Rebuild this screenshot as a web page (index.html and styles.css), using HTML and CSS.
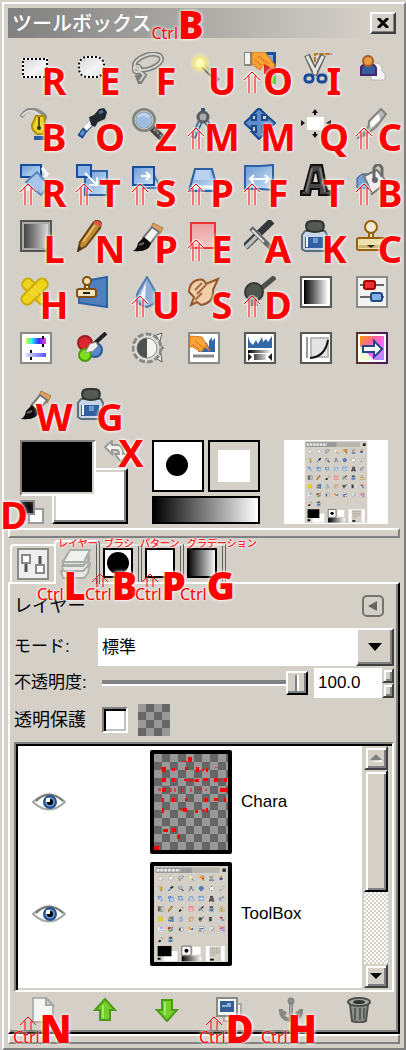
FILE: index.html
```html
<!DOCTYPE html>
<html lang="ja">
<head>
<meta charset="utf-8">
<meta name="viewport" content="width=device-width">
<title>ツールボックス</title>
<link rel="stylesheet" href="styles.css">
</head>
<body>
<svg class="defs" aria-hidden="true">
<defs>
<linearGradient id="g-bw"><stop offset="0" stop-color="#000"/><stop offset="1" stop-color="#fff"/></linearGradient>
<linearGradient id="g-grey"><stop offset="0" stop-color="#444"/><stop offset="1" stop-color="#d8d8d8"/></linearGradient>
<linearGradient id="g-paper" x2="1" y2="1"><stop offset="0" stop-color="#d8d8d8"/><stop offset=".6" stop-color="#f4f4f4"/><stop offset="1" stop-color="#ddd"/></linearGradient>
<linearGradient id="g-blue" x2="1" y2="1"><stop offset="0" stop-color="#6a9ad4"/><stop offset="1" stop-color="#cfe2f6"/></linearGradient>
<linearGradient id="g-hue"><stop offset="0" stop-color="#cf3"/><stop offset=".3" stop-color="#2ef"/><stop offset=".65" stop-color="#42f"/><stop offset="1" stop-color="#f4c"/></linearGradient>
<linearGradient id="g-sat"><stop offset="0" stop-color="#dde"/><stop offset="1" stop-color="#55f"/></linearGradient>
<linearGradient id="g-rainbow" x2="1" y2="1"><stop offset="0" stop-color="#f90"/><stop offset=".35" stop-color="#f69"/><stop offset=".6" stop-color="#f6f"/><stop offset="1" stop-color="#99f"/></linearGradient>
<linearGradient id="g-edge"><stop offset="0" stop-color="#5a3418"/><stop offset="1" stop-color="#4b1460"/></linearGradient>
<linearGradient id="g-pink" x2="0" y2="1"><stop offset="0" stop-color="#e8a0a0"/><stop offset="1" stop-color="#f8c8c8"/></linearGradient>
<radialGradient id="g-glow"><stop offset="0" stop-color="#fff"/><stop offset=".3" stop-color="#fff27a"/><stop offset="1" stop-color="#fff27a" stop-opacity="0"/></radialGradient>
<radialGradient id="g-black"><stop offset="0" stop-color="#000"/><stop offset="1" stop-color="#222"/></radialGradient>
<pattern id="checks" width="16" height="16" patternUnits="userSpaceOnUse"><path fill="#999" d="M0 0h16v16H0z"/><path fill="#666" d="M8 0h8v8H8zM0 8h8v8H0z"/></pattern>
</defs>

<symbol id="i-rect" viewBox="0 0 32 32"><path d="M3 7h24v18H3z" fill="url(#g-paper)" stroke="#fff" stroke-width="2"/><path d="M3 7h24v18H3z" fill="none" stroke="#000" stroke-width="2" stroke-dasharray="2 2"/></symbol>
<symbol id="i-ellipse" viewBox="0 0 32 32"><rect x="3" y="5" width="25" height="20" rx="8" fill="url(#g-paper)" stroke="#fff" stroke-width="2"/><rect x="3" y="5" width="25" height="20" rx="8" fill="none" stroke="#000" stroke-width="2" stroke-dasharray="2 2"/></symbol>
<symbol id="i-lasso" viewBox="0 0 32 32"><g fill="none" stroke="#7d7d79" stroke-width="5"><ellipse cx="16" cy="10" rx="14" ry="7" transform="rotate(-18 16 10)"/><circle cx="5" cy="17" r="3"/><path d="M7 19l5 4-4 7-2-5 8-2"/></g><g fill="none" stroke="#d6d6d2" stroke-width="2"><ellipse cx="16" cy="10" rx="14" ry="7" transform="rotate(-18 16 10)"/><circle cx="5" cy="17" r="3"/><path d="M7 19l5 4-4 6"/></g></symbol>
<symbol id="i-wand" viewBox="0 0 32 32"><path d="M14 13L30 29" stroke="#666" stroke-width="5"/><path d="M14 12l9 9" stroke="#cfcba8" stroke-width="3"/><circle cx="12" cy="11" r="11" fill="url(#g-glow)"/><circle cx="12" cy="11" r="4" fill="#fffbb8"/></symbol>
<symbol id="i-pick" viewBox="0 0 32 32"><path d="M20 0h12v12H20z" fill="#1f4f96"/><path d="M23 3h6v6h-6z" fill="#7fa9dc"/><path d="M20 12h12v10H20z" fill="#d22"/><path d="M24 22h8v10h-8z" fill="#62c81c"/><path d="M0 0h7v13H0z" fill="#f2f2ee" stroke="#83877f" stroke-width="2"/><path d="M8 0h13l10 13-3 3-8-4-4 6-8-6z" fill="#f9a438" stroke="#dd7411"/><path d="M14 4l11 8M11 8l6 5" stroke="#e07c18" stroke-width="2" stroke-dasharray="2 1"/></symbol>
<symbol id="i-scissors" viewBox="0 0 32 32"><path d="M15 10V2h17" fill="none" stroke="#b8801c" stroke-width="2" stroke-dasharray="5 1"/><path d="M7 3l9 20M23 3l-9 20" stroke="#5f625e" stroke-width="6"/><path d="M7 4l9 18M23 4l-9 18" stroke="#e5e5e2" stroke-width="3"/><g fill="#d4d0c8" stroke="#164a97" stroke-width="3"><rect x="5" y="23" width="8" height="7" rx="3"/><rect x="18" y="23" width="8" height="7" rx="3"/></g></symbol>
<symbol id="i-person" viewBox="0 0 32 32"><path d="M15 27V16q0-6 6-5 5 1 5 8l3 3v6H17z" fill="#f4f4f4" stroke="#bbb"/><path d="M5 23v-8q2-3 8-3t7 4v7z" fill="#345c9e" stroke="#4c2170" stroke-width="2"/><circle cx="12" cy="9" r="5" fill="#e89a48" stroke="#a95e1f" stroke-width="2"/></symbol>
<symbol id="i-path" viewBox="0 0 32 32"><path d="M1 9Q8-2 18 3t6 8" fill="none" stroke="#8c8e89" stroke-width="4"/><path d="M2 8q8-10 19 0" fill="none" stroke="#ddd" stroke-width="2"/><path d="M16 8h8q2 8-1 18h-6q-6-5-5-9z" fill="#ecd42a" stroke="#b18c05" stroke-width="2"/><path d="M19 9v11" stroke="#67550b" stroke-width="2"/><circle cx="19" cy="20" r="2" fill="#333"/><path d="M14 28h10v4H14z" fill="#2b5ba6"/></symbol>
<symbol id="i-dropper" viewBox="0 0 32 32"><path d="M19 11L8 23l-4 6" stroke="#1c4c8c" stroke-width="6" fill="none"/><path d="M18 12L9 21" stroke="#fff" stroke-width="5"/><path d="M8 23l-3 4" stroke="#5f91d0" stroke-width="3"/><path d="M13 9l5-2 5-6 5-1 3 4-2 7-7 3-3 5-4-2z" fill="#22282e"/><path d="M23 5l4-2" stroke="#466ca0" stroke-width="3"/></symbol>
<symbol id="i-zoom" viewBox="0 0 32 32"><path d="M19 19l11 11" stroke="#444" stroke-width="7"/><path d="M19 19l10 9" stroke="#999" stroke-width="2" stroke-dasharray="2 2"/><circle cx="12" cy="12" r="10" fill="#9dbce0" stroke="#81847e" stroke-width="4"/><circle cx="12" cy="12" r="9" fill="none" stroke="#ced2cb"/><path d="M6 9q5-5 11 0" stroke="#c2d6ee" stroke-width="3" fill="none"/></symbol>
<symbol id="i-compass" viewBox="0 0 32 32"><path d="M13 12L5 30M17 12l12 17" stroke="#39587f" stroke-width="5"/><path d="M13 12L6 28M17 12l10 14" stroke="#a6c0de" stroke-width="2"/><path d="M13 0h4v6h-4z" fill="#35547b"/><circle cx="15" cy="9" r="5" fill="#aaa" stroke="#555b60" stroke-width="3"/></symbol>
<symbol id="i-move" viewBox="0 0 32 32"><path d="M15 0l7 7h-4v5h5V8l8 7-8 7v-4h-5v6h4l-7 7-7-7h4v-6H8v4l-8-7 8-7v4h4V7H8z" fill="#5f8cc7" stroke="#164a8c" stroke-width="2"/></symbol>
<symbol id="i-align" viewBox="0 0 32 32"><path d="M7 9h17v13H7z" fill="#fff"/><path d="M15 1l3 4h-2v2h-2V5h-2zM15 30l3-4h-2v-2h-2v2h-2zM1 12l4 3-4 3zM31 12l-5 3 5 3z" fill="#111"/></symbol>
<symbol id="i-crop" viewBox="0 0 32 32"><path d="M1 30Q14 22 13 13L25 1l5 5-10 13Q10 28 1 30z" fill="#b9b9b4" stroke="#83857f" stroke-width="2"/><path d="M14 15q5-7 9-9l1 6-9 8z" fill="#fff"/></symbol>
<symbol id="i-rotate" viewBox="0 0 32 32"><path d="M1 1h20v12H1z" fill="url(#g-blue)" stroke="#174e99" stroke-width="2"/><path d="M17 8l12 14-8 9L6 18z" fill="#a6c5e8" stroke="#5d87bd" stroke-width="2"/><path d="M22 4l5 6-2 3M5 25h6" stroke="#fff" stroke-width="3" fill="none"/></symbol>
<symbol id="i-scale" viewBox="0 0 32 32"><path d="M9 7h22v24H9z" fill="url(#g-blue)" stroke="#2c61a6" stroke-width="2"/><path d="M1 1h14v12H1z" fill="#8db5e3" stroke="#174e99" stroke-width="2"/><path d="M9 9l11 11m1-7v8h-8" fill="none" stroke="#fff" stroke-width="2"/></symbol>
<symbol id="i-shear" viewBox="0 0 32 32"><path d="M18 4l11 20H11z" fill="#bdd3eb" stroke="#587fae" stroke-width="2"/><path d="M1 3h21v18H1z" fill="url(#g-blue)" stroke="#174e99" stroke-width="2"/><path d="M9 12h9m-4-4l4 4-4 4" fill="none" stroke="#fff" stroke-width="2"/></symbol>
<symbol id="i-perspective" viewBox="0 0 32 32"><path d="M7 5h17l6 22H1z" fill="url(#g-blue)" stroke="#2c61a6" stroke-width="2"/><path d="M8 6h14v10H6z" fill="#b9d2ef"/><path d="M4 23h23" stroke="#fff" stroke-width="3"/></symbol>
<symbol id="i-flip" viewBox="0 0 32 32"><path d="M1 2h15l13-1v25l-13-1H1z" fill="url(#g-blue)" stroke="#2c61a6" stroke-width="2"/><path d="M6 15h19M10 11l-4 4 4 4M21 11l4 4-4 4" fill="none" stroke="#fff" stroke-width="2"/></symbol>
<symbol id="i-text" viewBox="0 0 32 32"><path fill-rule="evenodd" d="M11 1h11l5 26h3v4H19v-6h-8l-1 6H1v-4h3zM14 9l-2 10h7L17 8z" fill="#454545" stroke="#111" stroke-width="2"/><path d="M12 4L6 28M20 4l5 24" stroke="#777" stroke-width="2"/></symbol>
<symbol id="i-bucket" viewBox="0 0 32 32"><path d="M1 14l5-4h8v14H1z" fill="#759fd2" stroke="#2a5697"/><path d="M8 12l13-6 10 12-15 12z" fill="#eee" stroke="#777" stroke-width="2"/><path d="M18 16V4q4-7 8 0v9" fill="none" stroke="#686b67" stroke-width="3"/><circle cx="19" cy="16" r="3" fill="#666"/></symbol>
<symbol id="i-gradient" viewBox="0 0 32 32"><path d="M1 1h30v30H1z" fill="#aaa" stroke="#555753" stroke-width="2"/><path d="M4 4h24v24H4z" fill="url(#g-grey)"/></symbol>
<symbol id="i-pencil" viewBox="0 0 32 32"><path d="M2 31l2-9L18 2q4-3 7 1l-1 5L10 26z" fill="#c08a35" stroke="#6d4512" stroke-width="2"/><path d="M7 22L19 5" stroke="#e9bd6a" stroke-width="2"/><path d="M17 2q5-3 9 2l-2 3-6-4z" fill="#ea5147"/><path d="M2 31l1-5 3 2z" fill="#333"/></symbol>
<symbol id="i-brush" viewBox="0 0 32 32"><path d="M21 3l10 5-4 7-9-4z" fill="#dfa261" stroke="#a77645"/><path d="M20 7l7 5-9 12-7-6z" fill="#f3f3f1" stroke="#777" stroke-width="2"/><path d="M12 17l7 6q-2 10-18 8 4-2 5-8z" fill="#0a0a0a"/><path d="M7 25l5-2" stroke="#666" stroke-width="2"/></symbol>
<symbol id="i-eraser" viewBox="0 0 32 32"><path d="M3 3h24v25H3z" fill="url(#g-pink)" stroke="#ee3434" stroke-width="2"/></symbol>
<symbol id="i-airbrush" viewBox="0 0 32 32"><path d="M1 27L28 1" stroke="#33393a" stroke-width="7"/><path d="M1 28l15-15" stroke="#bbb" stroke-width="4"/><path d="M7 8l21 21" stroke="#666" stroke-width="5"/><path d="M8 10l12 12" stroke="#ddd" stroke-width="2"/></symbol>
<symbol id="i-ink" viewBox="0 0 32 32"><path d="M5 11h20l2 4v14l-3 2H5l-3-2V15z" fill="#c5d6e9" stroke="#5f6c79" stroke-width="2"/><path d="M5 17h18v11H5z" fill="#315f9f"/><path d="M7 17v10" stroke="#fff" stroke-width="2"/><path d="M13 18h5v5h-5z" fill="#6f9ad0"/><path d="M7 10q-3-9 5-9h6q8 0 5 9-8 4-16 0z" fill="#545955" stroke="#303430" stroke-width="2"/></symbol>
<symbol id="i-stamp" viewBox="0 0 32 32"><circle cx="15" cy="7" r="6" fill="#eee8d0" stroke="#96610a" stroke-width="2"/><path d="M13 13h4v6h-4z" fill="#eee4bd" stroke="#96610a" stroke-width="2"/><rect x="1" y="18" width="29" height="12" rx="2" fill="#eee0ae" stroke="#96610a" stroke-width="2"/><path d="M3 25h25v3H3z" fill="#cfb777"/><path d="M11 25h8l-4 3z" fill="#332a15"/></symbol>
<symbol id="i-heal" viewBox="0 0 32 32"><g fill="#efd51a" stroke="#c9ab0b" stroke-width="2"><rect x="-1" y="10" width="32" height="11" rx="5" transform="rotate(45 15 16)"/><rect x="-1" y="10" width="32" height="11" rx="5" transform="rotate(-45 15 16)"/></g><path d="M11 13l8 8M14 10l8 8M10 16l6 6" stroke="#fff28a" stroke-width="1" stroke-dasharray="2 2"/></symbol>
<symbol id="i-persp-clone" viewBox="0 0 32 32"><path d="M14 4l17-3v30L3 27v-7z" fill="#4f80bd" stroke="#2c61a6" stroke-width="2"/><circle cx="11" cy="5" r="4" fill="#f0e2b4" stroke="#7d500b" stroke-width="2"/><path d="M9 9h4v5H9z" fill="#eedfae" stroke="#7d500b" stroke-width="2"/><rect x="1" y="13" width="19" height="8" rx="2" fill="#f1e3b8" stroke="#7d500b" stroke-width="2"/><path d="M7 17h7" stroke="#222" stroke-width="2"/></symbol>
<symbol id="i-blur" viewBox="0 0 32 32"><path d="M15 1l8 14q5 12-8 16Q1 28 6 16z" fill="#8fb0d6" stroke="#567fae" stroke-width="2"/><path d="M14 6L8 20q0 5 5 5z" fill="#edf4fb"/></symbol>
<symbol id="i-smudge" viewBox="0 0 32 32"><path d="M3 29l3-8-5-5Q1 7 9 4q7-2 9 4l12-5-5 11q1 13-12 15l-4-3z" fill="#f3cda9" stroke="#95572c" stroke-width="2"/><path d="M7 14l7-7M9 18l9-9M7 24l7-7" stroke="#a36b42" stroke-width="2"/></symbol>
<symbol id="i-dodge" viewBox="0 0 32 32"><path d="M14 15L31 1" stroke="#4b504c" stroke-width="5"/><circle cx="10" cy="16" r="9" fill="#505550" stroke="#343834" stroke-width="2"/><path d="M6 21h8v9H6z" fill="#888"/></symbol>
<symbol id="i-blend" viewBox="0 0 32 32"><path d="M1 1h30v30H1z" fill="#fff" stroke="#555753" stroke-width="2"/><path d="M4 4h24v24H4z" fill="url(#g-bw)"/></symbol>
<symbol id="i-balance" viewBox="0 0 32 32"><path d="M1 1h30v30H1z" fill="#f2f2f2" stroke="#888a85" stroke-width="2"/><path d="M4 9h24M4 21h24" stroke="#666" stroke-width="2"/><rect x="8" y="5" width="11" height="8" rx="2" fill="#e93030" stroke="#a40000" stroke-width="2"/><rect x="15" y="17" width="11" height="8" rx="2" fill="#82aee0" stroke="#204a87" stroke-width="2"/></symbol>
<symbol id="i-hue" viewBox="0 0 32 32"><path d="M1 1h30v30H1z" fill="#fff" stroke="#888a85" stroke-width="2"/><path d="M6 6h20v6H6z" fill="url(#g-hue)"/><path d="M6 21h20v4H6z" fill="url(#g-sat)"/><path d="M23 4v3m0 5v3M11 18v3m0 4v3" stroke="#000" stroke-width="2"/></symbol>
<symbol id="i-colorize" viewBox="0 0 32 32"><circle cx="19" cy="18" r="7" fill="#5688c9" stroke="#2c5b9b" stroke-width="2"/><circle cx="9" cy="11" r="7" fill="#dd2730" stroke="#9c1b20" stroke-width="2"/><circle cx="9" cy="23" r="6" fill="#7be11f" stroke="#4c9a10" stroke-width="2"/><path d="M18 12L30 1" stroke="#222" stroke-width="4"/><path d="M9 21l5-9 6-2 2 4-5 5z" fill="#eee" stroke="#999"/></symbol>
<symbol id="i-bright" viewBox="0 0 32 32"><g fill="#eee" stroke="#5f625e"><path d="M22 4l8-3-2 8zM25 13l7 3-7 3zM22 25l8 5-1-8z"/></g><circle cx="15" cy="16" r="14" fill="#dcdcd8" stroke="#888a85" stroke-width="3" stroke-dasharray="6 2"/><circle cx="15" cy="16" r="10" fill="#f3f3f1" stroke="#888"/><path d="M15 6a10 10 0 0 0 0 20z" fill="#50524f"/></symbol>
<symbol id="i-threshold" viewBox="0 0 32 32"><path d="M1 1h30v30H1z" fill="#fff" stroke="#888a85" stroke-width="2"/><path d="M10 20l8-10 3 5V9l3-4v4l3-3v14z" fill="#3166a8"/><path d="M5 24h21" stroke="#888" stroke-width="3"/><path d="M2 4l12 1 8 14-5-4-4 5-8-5H2z" fill="#f9a438" stroke="#df7915"/><path d="M7 9l9 7M4 12l7 5" stroke="#d97412"/></symbol>
<symbol id="i-levels" viewBox="0 0 32 32"><path d="M1 1h30v30H1z" fill="#fff" stroke="#555753" stroke-width="2"/><path d="M4 4l2 6 3 3 3-5 2 4 4-7 1 5 3-3 2 3 4-6v12H4z" fill="#3166a8"/><path d="M4 18h24v3H4z" fill="url(#g-bw)"/><path d="M4 21l4 4-4 4zM28 21l-4 4 4 4z" fill="#222"/><path d="M10 22h12v6H10z" fill="url(#g-grey)"/></symbol>
<symbol id="i-curves" viewBox="0 0 32 32"><path d="M1 1h30v30H1z" fill="#fff" stroke="#555753" stroke-width="2"/><path d="M7 5v21" stroke="#999" stroke-width="2"/><path d="M11 6h17v19H11z" fill="#e4e4e4" stroke="#bbb" stroke-width="2"/><path d="M10 26q15-1 18-18" fill="none" stroke="#111" stroke-width="2"/></symbol>
<symbol id="i-posterize" viewBox="0 0 32 32"><path d="M1 1h30v30H1z" fill="#fff" stroke="url(#g-edge)" stroke-width="2"/><path d="M4 4h24v24H4z" fill="url(#g-rainbow)"/><path d="M4 14v14h14z" fill="#efffd8"/><path d="M7 14h11V9l8 8-8 8v-5H7z" fill="#fff" stroke="#204a87" stroke-width="2"/></symbol>

<symbol id="i-up-arrow" viewBox="0 0 18 22"><path d="M1 9l8-8 8 8M6 5v17M12 5v17" fill="none" stroke="#fff" stroke-width="4" opacity=".5"/><path d="M1 9l8-8 8 8M6 5v17M12 5v17" fill="none" stroke="#f00" stroke-width="1"/></symbol>
<symbol id="i-up-short" viewBox="0 0 18 14"><path d="M1 9l8-8 8 8M6 5v9M12 5v9" fill="none" stroke="#f00" stroke-width="1"/></symbol>
<symbol id="i-eye" viewBox="0 0 34 18"><path d="M1 9Q17-6 33 9 17 24 1 9z" fill="#fff" stroke="#a4a6a2" stroke-width="2"/><path d="M4 8Q17-5 31 8" fill="none" stroke="#777" stroke-width="2"/><circle cx="18" cy="9" r="6" fill="#5f8cc5" stroke="#244f8b" stroke-width="2"/><circle cx="18" cy="9" r="3" fill="#000"/><path d="M14 5h4v4h-4z" fill="#fff"/></symbol>

<symbol id="mini" viewBox="0 0 406 528">
<path fill="#d4d0c8" d="M0 0h406v528H0z"/><path fill="#999" d="M8 8h200v30H8z"/><path fill="#b8b5af" d="M208 8h150v30H208z"/><path d="M14 23h130" stroke="#eee" stroke-width="14" stroke-dasharray="16 5"/><path d="M376 14h18v18h-18z" fill="#222"/>
<g>
<use href="#i-rect" x="20" y="52" width="32" height="32"/><use href="#i-ellipse" x="76" y="52" width="32" height="32"/><use href="#i-lasso" x="132" y="52" width="32" height="32"/><use href="#i-wand" x="188" y="52" width="32" height="32"/><use href="#i-pick" x="244" y="52" width="32" height="32"/><use href="#i-scissors" x="300" y="52" width="32" height="32"/><use href="#i-person" x="356" y="52" width="32" height="32"/>
<use href="#i-path" x="20" y="108" width="32" height="32"/><use href="#i-dropper" x="76" y="108" width="32" height="32"/><use href="#i-zoom" x="132" y="108" width="32" height="32"/><use href="#i-compass" x="188" y="108" width="32" height="32"/><use href="#i-move" x="244" y="108" width="32" height="32"/><use href="#i-align" x="300" y="108" width="32" height="32"/><use href="#i-crop" x="356" y="108" width="32" height="32"/>
<use href="#i-rotate" x="20" y="164" width="32" height="32"/><use href="#i-scale" x="76" y="164" width="32" height="32"/><use href="#i-shear" x="132" y="164" width="32" height="32"/><use href="#i-perspective" x="188" y="164" width="32" height="32"/><use href="#i-flip" x="244" y="164" width="32" height="32"/><use href="#i-text" x="300" y="164" width="32" height="32"/><use href="#i-bucket" x="356" y="164" width="32" height="32"/>
<use href="#i-gradient" x="20" y="220" width="32" height="32"/><use href="#i-pencil" x="76" y="220" width="32" height="32"/><use href="#i-brush" x="132" y="220" width="32" height="32"/><use href="#i-eraser" x="188" y="220" width="32" height="32"/><use href="#i-airbrush" x="244" y="220" width="32" height="32"/><use href="#i-ink" x="300" y="220" width="32" height="32"/><use href="#i-stamp" x="356" y="220" width="32" height="32"/>
<use href="#i-heal" x="20" y="276" width="32" height="32"/><use href="#i-persp-clone" x="76" y="276" width="32" height="32"/><use href="#i-blur" x="132" y="276" width="32" height="32"/><use href="#i-smudge" x="188" y="276" width="32" height="32"/><use href="#i-dodge" x="244" y="276" width="32" height="32"/><use href="#i-blend" x="300" y="276" width="32" height="32"/><use href="#i-balance" x="356" y="276" width="32" height="32"/>
<use href="#i-hue" x="20" y="332" width="32" height="32"/><use href="#i-colorize" x="76" y="332" width="32" height="32"/><use href="#i-bright" x="132" y="332" width="32" height="32"/><use href="#i-threshold" x="188" y="332" width="32" height="32"/><use href="#i-levels" x="244" y="332" width="32" height="32"/><use href="#i-curves" x="300" y="332" width="32" height="32"/><use href="#i-posterize" x="356" y="332" width="32" height="32"/>
<use href="#i-brush" x="20" y="388" width="32" height="32"/><use href="#i-ink" x="76" y="388" width="32" height="32"/>
</g>
<path fill="#fff" d="M52 468h76v56H52zM284 440h104v84H284z"/><path d="M20 440h76v56H20zM20 504h16v12H20z"/>
<path d="M153 441h50v50h-50z" fill="#fff" stroke="#000" stroke-width="3"/><circle cx="178" cy="466" r="11"/><path fill="#fff" d="M212 444h44v44h-44z"/><path d="M152 496h108v28H152z" fill="url(#g-bw)"/>
<path fill="#d4d0c8" d="M304 442h64v81h-64z"/><path d="M310 454h52M310 466h52M310 478h52M310 490h30" stroke="#987" stroke-width="5" stroke-dasharray="6 4"/><path d="M308 510h20v10h-20z"/>
</symbol>
</svg>

<main class="window">
  <header class="titlebar">
    <h1 class="title">ツールボックス<span class="combo title-key"><small>Ctrl</small><b>B</b></span></h1>
    <button class="close" type="button" aria-label="閉じる"><svg viewBox="0 0 12 10"><path d="M1 0l10 10M11 0L1 10" stroke="#000" stroke-width="3"/></svg></button>
  </header>

  <section class="tools" aria-label="ツール">
    <button class="tool" type="button"><svg><use href="#i-rect"/></svg><b class="key">R</b></button>
    <button class="tool" type="button"><svg><use href="#i-ellipse"/></svg><b class="key">E</b></button>
    <button class="tool" type="button"><svg><use href="#i-lasso"/></svg><b class="key">F</b></button>
    <button class="tool" type="button"><svg><use href="#i-wand"/></svg><b class="key">U</b></button>
    <button class="tool" type="button"><svg><use href="#i-pick"/></svg><svg class="shift"><use href="#i-up-arrow"/></svg><b class="key">O</b></button>
    <button class="tool" type="button"><svg><use href="#i-scissors"/></svg><b class="key">I</b></button>
    <button class="tool" type="button" aria-label="前景抽出選択"><svg><use href="#i-person"/></svg></button>

    <button class="tool" type="button"><svg><use href="#i-path"/></svg><b class="key">B</b></button>
    <button class="tool" type="button"><svg><use href="#i-dropper"/></svg><b class="key">O</b></button>
    <button class="tool" type="button"><svg><use href="#i-zoom"/></svg><b class="key">Z</b></button>
    <button class="tool" type="button"><svg><use href="#i-compass"/></svg><svg class="shift"><use href="#i-up-arrow"/></svg><b class="key">M</b></button>
    <button class="tool" type="button"><svg><use href="#i-move"/></svg><b class="key">M</b></button>
    <button class="tool" type="button"><svg><use href="#i-align"/></svg><b class="key">Q</b></button>
    <button class="tool" type="button"><svg><use href="#i-crop"/></svg><svg class="shift"><use href="#i-up-arrow"/></svg><b class="key">C</b></button>

    <button class="tool" type="button"><svg><use href="#i-rotate"/></svg><svg class="shift"><use href="#i-up-arrow"/></svg><b class="key">R</b></button>
    <button class="tool" type="button"><svg><use href="#i-scale"/></svg><svg class="shift"><use href="#i-up-arrow"/></svg><b class="key">T</b></button>
    <button class="tool" type="button"><svg><use href="#i-shear"/></svg><svg class="shift"><use href="#i-up-arrow"/></svg><b class="key">S</b></button>
    <button class="tool" type="button"><svg><use href="#i-perspective"/></svg><svg class="shift"><use href="#i-up-arrow"/></svg><b class="key">P</b></button>
    <button class="tool" type="button"><svg><use href="#i-flip"/></svg><svg class="shift"><use href="#i-up-arrow"/></svg><b class="key">F</b></button>
    <button class="tool" type="button"><svg><use href="#i-text"/></svg><b class="key">T</b></button>
    <button class="tool" type="button"><svg><use href="#i-bucket"/></svg><svg class="shift"><use href="#i-up-arrow"/></svg><b class="key">B</b></button>

    <button class="tool" type="button"><svg><use href="#i-gradient"/></svg><b class="key">L</b></button>
    <button class="tool" type="button"><svg><use href="#i-pencil"/></svg><b class="key">N</b></button>
    <button class="tool" type="button"><svg><use href="#i-brush"/></svg><b class="key">P</b></button>
    <button class="tool" type="button"><svg><use href="#i-eraser"/></svg><svg class="shift"><use href="#i-up-arrow"/></svg><b class="key">E</b></button>
    <button class="tool" type="button"><svg><use href="#i-airbrush"/></svg><b class="key">A</b></button>
    <button class="tool" type="button"><svg><use href="#i-ink"/></svg><b class="key">K</b></button>
    <button class="tool" type="button"><svg><use href="#i-stamp"/></svg><b class="key">C</b></button>

    <button class="tool" type="button"><svg><use href="#i-heal"/></svg><b class="key">H</b></button>
    <button class="tool" type="button" aria-label="遠近スタンプ"><svg><use href="#i-persp-clone"/></svg></button>
    <button class="tool" type="button"><svg><use href="#i-blur"/></svg><svg class="shift"><use href="#i-up-arrow"/></svg><b class="key">U</b></button>
    <button class="tool" type="button"><svg><use href="#i-smudge"/></svg><b class="key">S</b></button>
    <button class="tool" type="button"><svg><use href="#i-dodge"/></svg><svg class="shift"><use href="#i-up-arrow"/></svg><b class="key">D</b></button>
    <button class="tool" type="button" aria-label="グラデーション"><svg><use href="#i-blend"/></svg></button>
    <button class="tool" type="button" aria-label="カラーバランス"><svg><use href="#i-balance"/></svg></button>

    <button class="tool" type="button" aria-label="色相-彩度"><svg><use href="#i-hue"/></svg></button>
    <button class="tool" type="button" aria-label="着色"><svg><use href="#i-colorize"/></svg></button>
    <button class="tool" type="button" aria-label="明るさ-コントラスト"><svg><use href="#i-bright"/></svg></button>
    <button class="tool" type="button" aria-label="しきい値"><svg><use href="#i-threshold"/></svg></button>
    <button class="tool" type="button" aria-label="レベル"><svg><use href="#i-levels"/></svg></button>
    <button class="tool" type="button" aria-label="トーンカーブ"><svg><use href="#i-curves"/></svg></button>
    <button class="tool" type="button" aria-label="ポスタリゼーション"><svg><use href="#i-posterize"/></svg></button>

    <button class="tool" type="button"><svg><use href="#i-brush"/></svg><b class="key">W</b></button>
    <button class="tool" type="button"><svg><use href="#i-ink"/></svg><b class="key">G</b></button>
  </section>

  <section class="swatches" aria-label="色とブラシ">
    <div class="colors">
      <button class="bg-color" type="button" aria-label="背景色"></button>
      <button class="fg-color" type="button" aria-label="描画色"></button>
      <svg class="swap" viewBox="0 0 24 24"><path d="M1 7l7-6v4h6q5 1 5 9h4l-6 8-6-8h4q0-4-3-4H8v4z" fill="#f6f6f4" stroke="#9a9a96" stroke-width="2"/></svg>
      <svg class="reset" viewBox="0 0 24 24"><path d="M9 9h14v14H9z" fill="#fff" stroke="#99999f" stroke-width="2"/><path d="M1 1h13v13H1z" fill="url(#g-black)" stroke="#888a8f" stroke-width="2"/></svg>
      <b class="key swap-key">X</b>
      <b class="key reset-key">D</b>
    </div>
    <div class="paint">
      <button class="paint-brush" type="button" aria-label="ブラシ"><svg viewBox="0 0 48 48"><circle cx="23" cy="23" r="11"/></svg></button>
      <button class="paint-pattern" type="button" aria-label="パターン"></button>
      <button class="paint-gradient" type="button" aria-label="グラデーション"></button>
    </div>
    <button class="preview" type="button" aria-label="現在の画像"><svg viewBox="0 0 406 528"><use href="#mini"/></svg></button>
  </section>

  <div class="divider"></div>

  <nav class="tabs" aria-label="パネル">
    <button class="tab first" type="button" aria-label="ツールオプション"><svg viewBox="0 0 32 32"><path d="M1 1h30v30H1z" fill="#eee" stroke="#8a8c88" stroke-width="2"/><path d="M9 15v9M23 8v9" stroke="#555" stroke-width="3"/><path d="M5 7h8v8H5zM19 17h8v8h-8z" fill="#fff" stroke="#888" stroke-width="2"/></svg></button>
    <button class="tab active" type="button" aria-label="レイヤー"><svg viewBox="0 0 32 32"><g fill="#e6e6e3" stroke="#aaaca8" stroke-width="2"><path d="M1 23h21l8-7-2 9-4 5H3z"/><path d="M2 18h21l6-7-1 7-5 5H3z"/><path d="M3 13h21l5-7-1 7-5 4H3z"/><path d="M10 2h20l-6 12H3z" fill="#f0f0ee"/></g></svg></button>
    <button class="tab" type="button" aria-label="ブラシ"><svg viewBox="0 0 32 32"><path d="M1 1h28v28H1z" fill="#fff" stroke="#000" stroke-width="2"/><circle cx="15" cy="15" r="11"/></svg></button>
    <button class="tab" type="button" aria-label="パターン"><svg viewBox="0 0 32 32"><path d="M1 1h28v28H1z" fill="#fff" stroke="#000" stroke-width="2"/></svg></button>
    <button class="tab" type="button" aria-label="グラデーション"><svg viewBox="0 0 32 32"><path d="M1 1h28v28H1z" fill="url(#g-bw)" stroke="#000" stroke-width="2"/></svg></button>
    <div class="tab-names"><span>レイヤー</span><span>ブラシ</span><span>パターン</span><span>グラデーション</span></div>
    <div class="tab-keys">
      <span class="combo"><small>Ctrl</small><b>L</b></span>
      <span class="combo"><svg class="shift-short"><use href="#i-up-short"/></svg><small>Ctrl</small><b>B</b></span>
      <span class="combo"><svg class="shift-short"><use href="#i-up-short"/></svg><small>Ctrl</small><b>P</b></span>
      <span class="combo"><small>Ctrl</small><b>G</b></span>
    </div>
  </nav>

  <section class="panel">
    <div class="panel-head">
      <h2 class="panel-title">レイヤー</h2>
      <button class="menu" type="button" aria-label="メニュー"><svg viewBox="0 0 22 22"><rect x="1" y="1" width="20" height="20" rx="4" fill="none" stroke="#74746f" stroke-width="2"/><path d="M15 6v10L6 11z" fill="#666662"/></svg></button>
    </div>
    <div class="field mode">
      <label for="mode">モード:</label>
      <span class="combo-box"><select id="mode"><option>標準</option></select><span class="drop" aria-hidden="true"><svg viewBox="0 0 14 8"><path d="M0 0h14L7 8z"/></svg></span></span>
    </div>
    <div class="field opacity">
      <label for="opacity">不透明度:</label>
      <input class="slider" id="opacity" type="range" min="0" max="100" value="100">
      <span class="spin">
        <input type="text" value="100.0" aria-label="不透明度の値">
        <span class="steps"><button type="button" aria-label="増やす"></button><button type="button" aria-label="減らす"></button></span>
      </span>
    </div>
    <div class="field lock">
      <label for="lock">透明保護</label>
      <input class="check" id="lock" type="checkbox">
      <svg class="checker" viewBox="0 0 32 32"><path d="M0 0h32v32H0z" fill="url(#checks)"/></svg>
    </div>

    <div class="list">
      <ul class="layers">
        <li class="layer">
          <svg class="eye"><use href="#i-eye"/></svg>
          <svg class="thumb" viewBox="0 0 74 96">
            <path d="M0 0h74v96H0z" fill="url(#checks)"/>
            <g fill="#f00"><path d="M34 3h4v5h-4zM28 7h5v1h-5zM8 13h4v5H8zM18 14h3v3h-3zM31 13h3v3h-3zM42 13h3v5h-3zM48 15h2v2h-2zM52 14h2v4h-2zM8 24h4v4H8zM18 24h3v4h-3zM30 25h3v2h-3zM41 25h4v3h-4zM50 24h4v3h-4zM60 24h4v4h-4zM70 24h3v4h-3zM8 34h4v4H8zM66 34h8v4h-8zM8 44h2v4H8zM18 44h3v4h-3zM31 44h2v3h-2zM50 44h4v4h-4zM60 44h4v3h-4zM70 44h2v4h-2zM8 54h2v5H8zM29 54h4v4h-4zM41 56h3v3h-3zM52 54h2v4h-2zM9 75h5v3H9zM18 74h4v4h-4zM23 81h3v4h-3zM0 92h5v4H0z"/><path opacity=".5" d="M34 25h9v3h-9zM4 34h3v3H4zM15 34h3v4h-3zM20 34h2v4h-2zM27 34h2v4h-2zM36 34h2v4h-2zM43 34h5v2h-5zM51 35h2v2h-2zM25 54h4v3h-4zM47 55h4v3h-4zM61 13h3v1h-3zM65 25h4v2h-4z"/></g>
          </svg>
          <span class="layer-name">Chara</span>
        </li>
        <li class="layer">
          <svg class="eye"><use href="#i-eye"/></svg>
          <svg class="thumb" viewBox="0 0 406 528" preserveAspectRatio="none"><use href="#mini"/></svg>
          <span class="layer-name">ToolBox</span>
        </li>
      </ul>
      <div class="scroll">
        <button class="raised scroll-btn" type="button" aria-label="上へスクロール"><svg viewBox="0 0 12 8"><path d="M2 8h10V6z" fill="#fff"/><path d="M6 0l6 6H0z" fill="#808080"/></svg></button>
        <div class="raised scroll-thumb"></div>
        <div class="scroll-trough"></div>
        <button class="raised scroll-btn" type="button" aria-label="下へスクロール"><svg viewBox="0 0 12 8"><path d="M0 1h12L6 7z"/></svg></button>
      </div>
    </div>

    <div class="actions">
      <button class="action" type="button"><svg viewBox="0 0 26 26"><path d="M3 1h13l7 7v17H3z" fill="#f5f5f3" stroke="#b0b2ae" stroke-width="2"/><path d="M16 1v7h7z" fill="#ccc" stroke="#a8aaa6" stroke-width="2"/></svg><span class="combo"><svg class="shift-short"><use href="#i-up-short"/></svg><small>Ctrl</small><b>N</b></span></button>
      <button class="action" type="button" aria-label="前面へ"><svg viewBox="0 0 26 26"><path d="M13 2l10 11h-5v10H8V13H3z" fill="#73cf28" stroke="#4d9b18" stroke-width="2"/><path d="M11 8v13" stroke="#a2e868" stroke-width="2"/></svg></button>
      <button class="action" type="button" aria-label="背面へ"><svg viewBox="0 0 26 26"><path d="M13 24l10-11h-5V3H8v10H3z" fill="#73cf28" stroke="#4d9b18" stroke-width="2"/><path d="M11 5v13" stroke="#a2e868" stroke-width="2"/></svg></button>
      <button class="action" type="button"><svg viewBox="0 0 26 26"><path d="M8 7h17v17H8z" fill="#eee" stroke="#aaa" stroke-width="2"/><path d="M1 1h20v18H1z" fill="#f5f5f5" stroke="#888a85" stroke-width="2"/><path d="M4 4h14v11H4z" fill="#345d96"/><path d="M6 8h5V6h4v4H6z" fill="#8fb0d6"/></svg><span class="combo"><svg class="shift-short"><use href="#i-up-short"/></svg><small>Ctrl</small><b>D</b></span></button>
      <button class="action" type="button"><svg viewBox="0 0 26 26"><g fill="none" stroke="#858783" stroke-width="4"><circle cx="13" cy="4" r="2" stroke-width="3"/><path d="M13 7v16M3 12q-1 10 10 11 11-1 10-11M8 17l-6-3M18 17l6-3"/></g><path d="M13 8v13" stroke="#ccc"/></svg><span class="combo"><small>Ctrl</small><b>H</b></span></button>
      <button class="action" type="button" aria-label="削除"><svg viewBox="0 0 26 26"><path d="M4 7h18l-2 17q-7 3-14 0z" fill="#8b8e89" stroke="#50534f" stroke-width="2"/><path d="M9 11v12M14 11v12M18 11v11" stroke="#5a5d58" stroke-width="2"/><ellipse cx="13" cy="5" rx="11" ry="4" fill="#a4a7a1" stroke="#4b4e4a" stroke-width="2"/><ellipse cx="13" cy="5" rx="6" ry="2" fill="#2f322f"/></svg></button>
    </div>
  </section>
  <div class="divider foot"></div>
</main>
</body>
</html>
```

FILE: styles.css
```css
* { box-sizing: border-box; }

body {
  margin: 0;
  background: #d4d0c8;
  color: #000;
  font-family: "Liberation Sans", "Noto Sans CJK JP", sans-serif;
  font-size: 17px;
}

button {
  margin: 0;
  padding: 0;
  border: 0;
  background: none;
  font: inherit;
  color: inherit;
}

svg { display: block; }
.defs { position: absolute; width: 0; height: 0; }

.window {
  margin: 2px 0 0 2px;
  padding: 4px;
  border: 2px solid;
  border-color: #fff #808080 #808080 #fff;
}

/* Title bar */
.titlebar {
  display: flex;
  align-items: center;
  justify-content: space-between;
  height: 30px;
  padding: 0 4px;
  background: linear-gradient(90deg, #808080, #d4d0c8 92%);
}
.title {
  position: relative;
  margin: 0;
  color: #fff;
  font: 500 20px/30px "Noto Sans CJK JP", sans-serif;
  white-space: nowrap;
}
.close {
  display: grid;
  place-items: center;
  width: 26px;
  height: 22px;
  background: #d4d0c8;
  border: 2px solid;
  border-color: #fff #404040 #404040 #fff;
  box-shadow: inset -1px -1px #808080;
}
.close svg { width: 12px; height: 10px; }

/* Shortcut letters laid over the controls */
.key,
.combo {
  position: absolute;
  display: flex;
  justify-content: center;
  color: #f00;
  font: 700 38px/38px "Noto Sans", sans-serif;
  text-shadow: 0 0 2px #fff, 0 0 4px #fff;
  pointer-events: none;
  z-index: 2;
}
.key {
  top: 21px;
  right: -8px;
  width: 36px;
}
.combo {
  align-items: baseline;
  white-space: nowrap;
}
.combo small { font-size: 16px; font-weight: 400; line-height: 16px; }
.title-key { left: 100%; top: -3px; }

/* Tools */
.tools {
  display: grid;
  grid-template-columns: repeat(7, 1fr);
  grid-auto-rows: 56px;
  margin-top: 2px;
}
.tool {
  position: relative;
  display: grid;
  place-items: center;
}
.tool svg { width: 32px; height: 32px; }
.tool .shift {
  position: absolute;
  left: 11px;
  top: 31px;
  width: 18px;
  height: 22px;
  z-index: 1;
}

/* Colours, brush, image */
.swatches {
  display: flex;
  gap: 24px;
  margin-top: 8px;
  padding: 0 12px;
}
.colors {
  position: relative;
  width: 108px;
  height: 84px;
}
.fg-color,
.bg-color {
  position: absolute;
  width: 76px;
  height: 56px;
  border: 2px solid;
}
.fg-color {
  left: 0;
  top: 0;
  background: #000;
  border-color: #808080 #fff #fff #808080;
  box-shadow: inset -2px -2px #d4d0c8;
}
.bg-color {
  right: 0;
  bottom: 0;
  background: #fff;
  border-color: #fff #000 #000 #fff;
  box-shadow: inset -2px -2px #808080, inset 2px 2px #d4d0c8;
}
.swap,
.reset { position: absolute; width: 24px; height: 24px; }
.swap { right: 0; top: 0; }
.reset { left: 0; bottom: 0; }
.swap-key { top: -7px; right: -21px; }
.reset-key { top: 55px; left: -24px; }

.paint {
  display: grid;
  grid-template: 52px 28px / 52px 52px;
  gap: 4px;
}
.paint button { border: 2px solid #000; }
.paint .paint-brush { background: #fff; }
.paint .paint-pattern { padding: 8px; background: #fff content-box; }
.paint .paint-gradient { grid-column: span 2; background: linear-gradient(90deg, #000, #fff); }
.preview {
  display: grid;
  place-items: center;
  flex: 1;
  background: #fff;
}
.preview svg { width: 64px; height: 82px; }

.divider {
  height: 10px;
  margin-top: 4px;
  border: 2px solid;
  border-color: #fff #808080 #808080 #fff;
}
.divider.foot { margin-top: 0; }

/* Tabs */
.tabs {
  position: relative;
  display: flex;
  height: 42px;
  margin-top: 2px;
  padding-left: 2px;
}
.tab {
  display: grid;
  place-items: center;
  width: 42px;
  margin-top: 4px;
  border-top: 2px solid #e8e6e2;
  border-right: 4px double #606060;
}
.tab svg { width: 32px; height: 32px; }
.tab.first {
  width: 44px;
  border-top-color: #fff;
  border-left: 2px solid #fff;
  border-right: 0;
  border-radius: 4px 0 0 0;
}
.tab.active {
  width: 46px;
  margin: 0 0 -2px;
  padding-top: 2px;
  background: #d4d0c8;
  border-top: 2px solid #fff;
  border-left: 2px solid #fff;
  border-radius: 4px 4px 0 0;
  z-index: 1;
}
.tab-names,
.tab-keys {
  position: absolute;
  display: grid;
  white-space: nowrap;
  pointer-events: none;
  z-index: 2;
}
.tab-names {
  left: 50px;
  top: -4px;
  grid-template-columns: 46px 36px 47px auto;
  color: #f22;
  font: 500 10px/14px "Noto Sans CJK JP", sans-serif;
  text-shadow: 0 0 2px #fff, 0 0 3px #fff;
}
.tab-keys {
  left: 29px;
  top: 26px;
  grid-template-columns: 48px 50px 45px auto;
}
.tab-keys .combo { position: relative; justify-content: flex-start; }
.shift-short {
  position: absolute;
  left: 6px;
  top: 7px;
  width: 18px;
  height: 14px;
}

/* Layers panel */
.panel {
  padding: 0 4px;
  border: 2px solid;
  border-color: #fff #000 #000 #fff;
  box-shadow: inset -2px -2px #808080;
}
.panel-head {
  display: flex;
  align-items: center;
  justify-content: space-between;
  height: 44px;
  padding-right: 10px;
}
.panel-title { margin: 0; font-size: 18px; font-weight: 400; line-height: 24px; }
.menu svg { width: 22px; height: 22px; }

.field { display: flex; align-items: center; white-space: nowrap; }
.field label { flex: none; width: 88px; line-height: 24px; }

.mode { height: 38px; }
.mode label { width: 84px; }
.combo-box { position: relative; flex: 1; height: 38px; }
.combo-box select {
  width: 100%;
  height: 100%;
  margin: 0;
  padding: 0 40px 0 4px;
  border: 0;
  border-radius: 0;
  appearance: none;
  background: #fff;
  color: #000;
  font: inherit;
}
.drop {
  position: absolute;
  right: 0;
  top: 0;
  bottom: 0;
  display: grid;
  place-items: center;
  width: 38px;
  background: #d4d0c8;
  border: 2px solid;
  border-color: #fff #404040 #404040 #fff;
  box-shadow: inset -2px -2px #808080;
  pointer-events: none;
}
.drop svg { width: 14px; height: 8px; }

.opacity { height: 30px; margin-top: 2px; }
.slider {
  flex: 1;
  min-width: 0;
  height: 24px;
  margin: 0 6px 0 0;
  appearance: none;
  background: linear-gradient(#808080 4px, #fff 4px) center / 100% 6px no-repeat;
}
.slider::-webkit-slider-thumb {
  appearance: none;
  width: 22px;
  height: 24px;
  background: linear-gradient(90deg, #808080 2px, #fff 2px) center / 4px 16px no-repeat #d4d0c8;
  border: 2px solid;
  border-color: #fff #000 #000 #fff;
  box-shadow: inset -2px -2px #808080;
}
.spin { display: flex; width: 80px; height: 30px; }
.spin input {
  flex: 1;
  min-width: 0;
  padding: 0 4px;
  border: 0;
  background: #fff;
  font: inherit;
}
.steps { display: grid; grid-template-rows: 1fr 1fr; width: 12px; }
.steps button,
.raised {
  background: #d4d0c8;
  border: 2px solid;
  border-color: #d4d0c8 #404040 #404040 #d4d0c8;
  box-shadow: inset 2px 2px #fff, inset -2px -2px #808080;
}

.lock { height: 32px; margin-top: 6px; }
.lock label { font-size: 18px; }
.check {
  width: 26px;
  height: 26px;
  margin: 0 10px 0 0;
  appearance: none;
  background: #fff;
  border: 2px solid;
  border-color: #808080 #fff #fff #808080;
  box-shadow: inset 2px 2px #000, inset -2px -2px #c0c0c0;
}
.checker { width: 32px; height: 32px; }

.list {
  display: flex;
  min-height: 250px;
  margin-top: 6px;
  background: #fff;
  border: 2px solid;
  border-color: #808080 #fff #fff #808080;
  box-shadow: inset 2px 2px #000, inset -2px -2px #d4d0c8;
  padding: 2px;
}
.layers { flex: 1; margin: 0; padding: 0; list-style: none; }
.layer { display: flex; align-items: center; height: 112px; padding-left: 14px; }
.eye { width: 34px; height: 18px; margin-right: 84px; }
.thumb {
  width: 82px;
  height: 104px;
  margin-right: 9px;
  background: #000;
  border: 4px solid #000;
  border-radius: 2px;
}
.layer-name { line-height: 24px; }

.scroll {
  display: flex;
  flex-direction: column;
  width: 28px;
  padding: 0 2px;
  background: #d4d0c8;
}
.scroll-btn { display: grid; place-items: center; height: 24px; }
.scroll-btn svg { width: 12px; height: 8px; }
.scroll-thumb { height: 122px; border-right-color: #000; border-bottom-color: #000; }
.scroll-trough {
  flex: 1;
  background: repeating-conic-gradient(#fff 0 25%, #d4d0c8 0 50%) 0 0 / 4px 4px;
}

.actions {
  display: grid;
  grid-template-columns: repeat(5, 62fr) 74fr;
  height: 40px;
  margin: 0 -2px;
}
.action { position: relative; display: grid; justify-items: center; align-content: start; padding-top: 5px; }
.action > svg { width: 26px; height: 26px; }
.action .combo { left: 1px; top: 17px; }
```
